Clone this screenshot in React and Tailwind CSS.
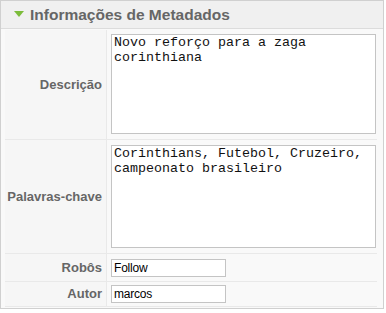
export default function App() {
  const label = "w-[102px] shrink-0 bg-[#f6f6f6] border-r border-b border-[#e9e9e9] flex items-center justify-end pr-[4px] text-[13px] font-bold text-[#666]";
  const mono = { fontFamily: "'Liberation Mono', 'Courier New', monospace" };
  return (
    <div className="w-[386px] h-[313px] bg-white" style={{ fontFamily: "'Liberation Sans', Arial, sans-serif" }}>
      <div className="w-[384px] border border-[#d0d0d0] bg-[#f9f9f9]">
        <div className="h-[28px] bg-[#f0f0f0] border-b border-[#dcdcdc] flex items-center pl-[13px] gap-[6px]">
          <svg width="10" height="7" viewBox="0 0 10 7"><polygon points="0,0 10,0 5,6" fill="#7cbc3b" /></svg>
          <span className="text-[15.5px] font-bold text-[#666]">Informações de Metadados</span>
        </div>
        <div className="pt-[1px] pb-[1px] pl-[4px] pr-[6px] flex flex-col">
          <div className="flex h-[110px]">
            <div className={label}>Descrição</div>
            <div className="flex-1 pl-[4px] pt-[4px] border-b border-[#e9e9e9]">
              <textarea readOnly className="block w-[265px] h-[100px] border border-[#c4c4c4] bg-white px-[2px] pt-0 text-[13.33px] leading-[15px] text-[#111] resize-none outline-none" style={mono} value={"Novo reforço para a zaga corinthiana"} />
            </div>
          </div>
          <div className="flex h-[114px]">
            <div className={label}>Palavras-chave</div>
            <div className="flex-1 pl-[4px] pt-[5px] border-b border-[#e9e9e9]">
              <textarea readOnly className="block w-[265px] h-[103px] border border-[#c4c4c4] bg-white px-[2px] pt-0 text-[13.33px] leading-[15px] text-[#111] resize-none outline-none" style={mono} value={"Corinthians, Futebol, Cruzeiro, campeonato brasileiro"} />
            </div>
          </div>
          <div className="flex h-[28px]">
            <div className={label}>Robôs</div>
            <div className="flex-1 pl-[4px] pt-[5px] border-b border-[#e9e9e9]">
              <input readOnly value="Follow" className="block w-[115px] h-[18px] border border-[#c4c4c4] bg-white px-[2px] text-[12px] text-black outline-none tracking-[-0.2px]" />
            </div>
          </div>
          <div className="flex h-[25px]">
            <div className={label}>Autor</div>
            <div className="flex-1 pl-[4px] pt-[3px] border-b border-[#e9e9e9]">
              <input readOnly value="marcos" className="block w-[115px] h-[18px] border border-[#c4c4c4] bg-white px-[2px] text-[12px] text-black outline-none tracking-[-0.2px]" />
            </div>
          </div>
        </div>
      </div>
    </div>
  );
}
